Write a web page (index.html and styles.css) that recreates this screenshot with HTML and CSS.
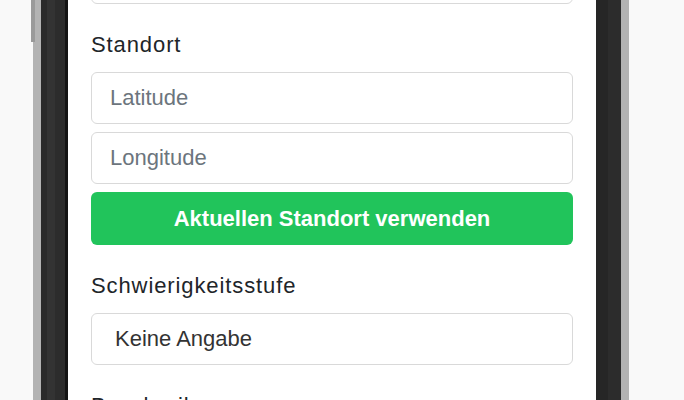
FILE: index.html
```html
<!DOCTYPE html>
<html lang="de">
<head>
<meta charset="utf-8">
<title>Standort</title>
<link rel="stylesheet" href="styles.css">
</head>
<body>
<div class="stage">
  <div class="side-button"></div>
  <div class="device">
    <div class="screen">
      <form class="form">
        <div class="group group-first">
          <input class="field" type="text" placeholder="">
        </div>
        <div class="group">
          <label class="label">Standort</label>
          <div class="stack">
            <input class="field" type="text" placeholder="Latitude">
            <input class="field" type="text" placeholder="Longitude">
            <button class="btn" type="button">Aktuellen Standort verwenden</button>
          </div>
        </div>
        <div class="group">
          <label class="label">Schwierigkeitsstufe</label>
          <div class="field select">Keine Angabe</div>
        </div>
        <div class="group">
          <label class="label">Beschreibung</label>
        </div>
      </form>
    </div>
  </div>
</div>
</body>
</html>
```
FILE: styles.css
```css
html, body {
  margin: 0;
  padding: 0;
  background: #f9f9f9;
  overflow: hidden;
}
.stage {
  position: relative;
  height: 400px;
  padding-left: 33px;
  display: flex;
  overflow: hidden;
}
.side-button {
  position: absolute;
  left: 31px;
  top: 0;
  width: 4px;
  height: 42px;
  background: #9a9a9a;
}
.device {
  box-sizing: border-box;
  width: 596px;
  flex: none;
  border-left: 8px solid #b3b3b3;
  border-right: 8px solid #b3b3b3;
  background: linear-gradient(to right,
    #2a2a2a 0, #2a2a2a 6px,
    #333333 6px, #333333 14px,
    #2c2c2c 14px, #2c2c2c 24px,
    #141414 24px, #141414 27px,
    #ffffff 27px, #ffffff 555px,
    #262626 555px, #262626 567px,
    #2c2c2c 567px, #2c2c2c 580px);
  padding: 0 25px 0 27px;
  display: flex;
}
.screen {
  flex: 1;
  min-width: 0;
  background: #ffffff;
  padding: 0 23px;
  overflow: hidden;
}
.form {
  display: flex;
  flex-direction: column;
  gap: 24px;
  margin-top: -48px;
}
.group {
  display: flex;
  flex-direction: column;
}
.label {
  font-family: "Liberation Sans", Arial, sans-serif;
  font-size: 22px;
  line-height: 33px;
  letter-spacing: 0.9px;
  color: #212529;
  margin-bottom: 11px;
}
.stack {
  display: flex;
  flex-direction: column;
  gap: 8px;
}
.field {
  box-sizing: border-box;
  width: 100%;
  height: 52px;
  margin: 0;
  border: 1px solid #d9d9d9;
  border-radius: 6px;
  background: #ffffff;
  padding: 0 18px;
  font-family: "Liberation Sans", Arial, sans-serif;
  font-size: 22px;
  color: #333333;
  outline: none;
}
.field::placeholder {
  color: #6c757d;
  opacity: 1;
}
.select {
  display: flex;
  align-items: center;
  padding-left: 23px;
}
.btn {
  box-sizing: border-box;
  width: 100%;
  height: 53px;
  margin: 0;
  border: none;
  border-radius: 6px;
  background: #21c45b;
  color: #ffffff;
  font-family: "Liberation Sans", Arial, sans-serif;
  font-size: 22px;
  font-weight: bold;
  cursor: pointer;
}
```
